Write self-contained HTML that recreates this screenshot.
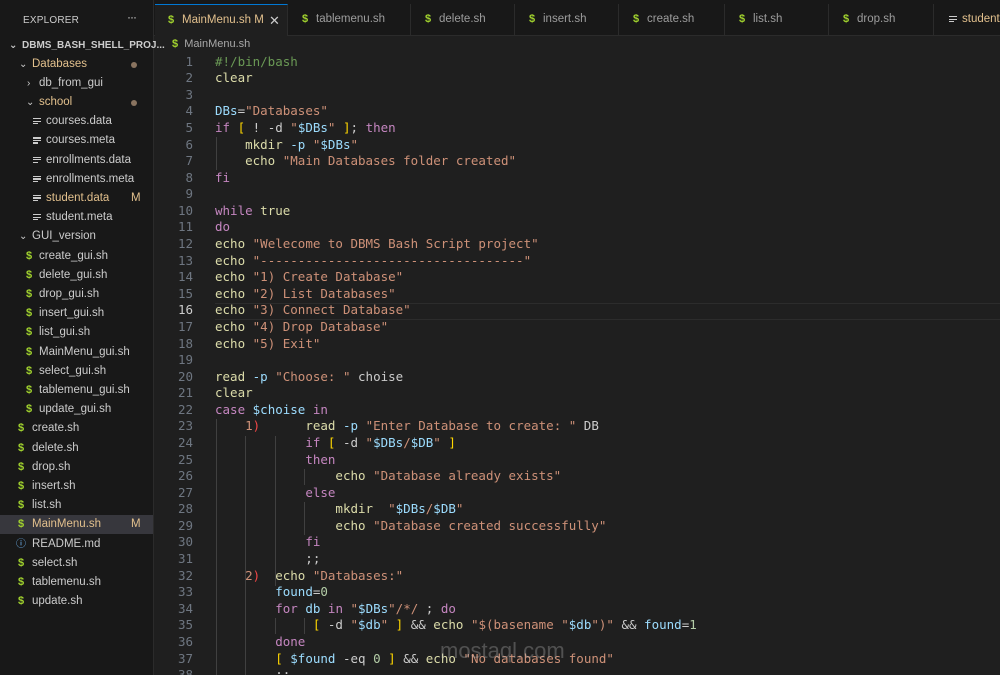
<!DOCTYPE html>
<html><head><meta charset="utf-8"><style>
*{margin:0;padding:0;box-sizing:border-box}
html,body{width:1000px;height:675px;overflow:hidden}
body{background:#1f1f1f;font-family:"Liberation Sans","DejaVu Sans",sans-serif;position:relative}
#side{position:absolute;left:0;top:0;width:154px;height:675px;background:#181818;border-right:1px solid #2b2b2b}
.hdr{position:absolute;left:23px;top:15px;font-size:10px;color:#cccccc;letter-spacing:.2px}
.dots{position:absolute;left:127px;top:10px;font-size:12px;color:#ccc;letter-spacing:-1px}
.row{position:absolute;left:0;width:153px;height:19px;font-size:11.5px;color:#cccccc;line-height:19px;white-space:nowrap}
.row .t{position:absolute}
.sel{background:#37373d}
.y{color:#e2c08d}
.dol{color:#a1d22e;font-weight:bold;font-size:11px;position:absolute}
.fi{position:absolute;width:8px;height:8px;top:6px}
.fi i{display:block;height:1.3px;background:#ccc;margin-bottom:1.3px}
.dot{position:absolute;left:131px;top:7px;width:6px;height:6px;border-radius:50%;background:#8a7460}
.M{position:absolute;left:131px;color:#e2c08d}
.chev{position:absolute;color:#ccc;font-size:10px}
#tabs{position:absolute;left:154px;top:0;right:0;height:36px;background:#181818;border-bottom:1px solid #2b2b2b}
.tab{position:absolute;top:4px;height:31px;border-right:1px solid #2b2b2b;font-size:11.5px;color:#9d9d9d;line-height:31px;white-space:nowrap;overflow:hidden}
.tab.act{background:#1f1f1f;border-top:1px solid #0078d4;height:32px;color:#e2c08d}
#crumb{position:absolute;left:172px;top:38px;font-size:11px;color:#a9a9a9}
#code{position:absolute;left:154px;top:53.7px;right:0;height:640px;font-family:"DejaVu Sans Mono","Liberation Mono",monospace;font-size:12.5px;line-height:16.58px;color:#cccccc}
.ln{position:absolute;top:0;left:0;width:39px;text-align:right;color:#6e7681;white-space:pre}
.cl{position:absolute;top:0;left:61px;white-space:pre}
.k{color:#c586c0}.s{color:#ce9178}.v{color:#9cdcfe}.f{color:#dcdcaa}.c{color:#6a9955}.b{color:#ffd700}.r{color:#f44747}.n{color:#b5cea8}
.g{position:absolute;width:1px;background:#404040}
</style></head><body>
<div id="side">
<div class="hdr">EXPLORER</div><div class="dots">···</div>
<div class="row" style="top:36px;font-weight:bold;font-size:10px"><span class="chev" style="left:9px">⌄</span><span class="t" style="left:22px">DBMS_BASH_SHELL_PROJ...</span></div>
<div class="row y" style="top:54.5px"><span class="chev" style="left:19px">⌄</span><span class="t" style="left:32px">Databases</span><span class="dot"></span></div>
<div class="row" style="top:73.7px"><span class="chev" style="left:27px">›</span><span class="t" style="left:39px">db_from_gui</span></div>
<div class="row y" style="top:92.9px"><span class="chev" style="left:26px">⌄</span><span class="t" style="left:39px">school</span><span class="dot"></span></div>
<div class="row" style="top:112px"><span class="fi" style="left:33px"><i></i><i></i><i style="width:5px"></i></span><span class="t" style="left:46px">courses.data</span></div>
<div class="row" style="top:131.3px"><span class="fi" style="left:33px"><i></i><i></i><i style="width:5px"></i></span><span class="t" style="left:46px">courses.meta</span></div>
<div class="row" style="top:150.5px"><span class="fi" style="left:33px"><i></i><i></i><i style="width:5px"></i></span><span class="t" style="left:46px">enrollments.data</span></div>
<div class="row" style="top:169.7px"><span class="fi" style="left:33px"><i></i><i></i><i style="width:5px"></i></span><span class="t" style="left:46px">enrollments.meta</span></div>
<div class="row y" style="top:188.9px"><span class="fi" style="left:33px"><i></i><i></i><i style="width:5px"></i></span><span class="t" style="left:46px">student.data</span><span class="M">M</span></div>
<div class="row" style="top:208px"><span class="fi" style="left:33px"><i></i><i></i><i style="width:5px"></i></span><span class="t" style="left:46px">student.meta</span></div>
<div class="row" style="top:227.3px"><span class="chev" style="left:19px">⌄</span><span class="t" style="left:32px">GUI_version</span></div>
<div class="row" style="top:246.5px"><span class="dol" style="left:26px">$</span><span class="t" style="left:39px">create_gui.sh</span></div>
<div class="row" style="top:265.7px"><span class="dol" style="left:26px">$</span><span class="t" style="left:39px">delete_gui.sh</span></div>
<div class="row" style="top:284.9px"><span class="dol" style="left:26px">$</span><span class="t" style="left:39px">drop_gui.sh</span></div>
<div class="row" style="top:304px"><span class="dol" style="left:26px">$</span><span class="t" style="left:39px">insert_gui.sh</span></div>
<div class="row" style="top:323.3px"><span class="dol" style="left:26px">$</span><span class="t" style="left:39px">list_gui.sh</span></div>
<div class="row" style="top:342.5px"><span class="dol" style="left:26px">$</span><span class="t" style="left:39px">MainMenu_gui.sh</span></div>
<div class="row" style="top:361.7px"><span class="dol" style="left:26px">$</span><span class="t" style="left:39px">select_gui.sh</span></div>
<div class="row" style="top:380.9px"><span class="dol" style="left:26px">$</span><span class="t" style="left:39px">tablemenu_gui.sh</span></div>
<div class="row" style="top:400px"><span class="dol" style="left:26px">$</span><span class="t" style="left:39px">update_gui.sh</span></div>
<div class="row" style="top:419.3px"><span class="dol" style="left:18px">$</span><span class="t" style="left:32px">create.sh</span></div>
<div class="row" style="top:438.5px"><span class="dol" style="left:18px">$</span><span class="t" style="left:32px">delete.sh</span></div>
<div class="row" style="top:457.7px"><span class="dol" style="left:18px">$</span><span class="t" style="left:32px">drop.sh</span></div>
<div class="row" style="top:476.9px"><span class="dol" style="left:18px">$</span><span class="t" style="left:32px">insert.sh</span></div>
<div class="row" style="top:496px"><span class="dol" style="left:18px">$</span><span class="t" style="left:32px">list.sh</span></div>
<div class="row sel y" style="top:515.3px"><span class="dol" style="left:18px">$</span><span class="t" style="left:32px">MainMenu.sh</span><span class="M">M</span></div>
<div class="row" style="top:534.5px"><span class="t" style="left:16px;color:#75beff;font-size:10px">ⓘ</span><span class="t" style="left:32px">README.md</span></div>
<div class="row" style="top:553.7px"><span class="dol" style="left:18px">$</span><span class="t" style="left:32px">select.sh</span></div>
<div class="row" style="top:572.9px"><span class="dol" style="left:18px">$</span><span class="t" style="left:32px">tablemenu.sh</span></div>
<div class="row" style="top:592px"><span class="dol" style="left:18px">$</span><span class="t" style="left:32px">update.sh</span></div>
</div>
<div id="tabs">
<div class="tab act" style="left:1px;width:133px"><span class="dol" style="left:13px">$</span><span style="position:absolute;left:27px">MainMenu.sh M</span><span style="position:absolute;left:114px;color:#ccc;font-size:13px">✕</span></div>
<div class="tab" style="left:134px;width:123px"><span class="dol" style="left:14px">$</span><span style="position:absolute;left:28px">tablemenu.sh</span></div>
<div class="tab" style="left:257px;width:104px"><span class="dol" style="left:14px">$</span><span style="position:absolute;left:28px">delete.sh</span></div>
<div class="tab" style="left:361px;width:104px"><span class="dol" style="left:14px">$</span><span style="position:absolute;left:28px">insert.sh</span></div>
<div class="tab" style="left:465px;width:106px"><span class="dol" style="left:14px">$</span><span style="position:absolute;left:28px">create.sh</span></div>
<div class="tab" style="left:571px;width:104px"><span class="dol" style="left:14px">$</span><span style="position:absolute;left:28px">list.sh</span></div>
<div class="tab" style="left:675px;width:105px"><span class="dol" style="left:14px">$</span><span style="position:absolute;left:28px">drop.sh</span></div>
<div class="tab" style="left:780px;width:80px;border-right:0"><span class="fi" style="left:15px;top:12px"><i></i><i></i><i style="width:5px"></i></span><span style="position:absolute;left:28px;color:#e2c08d">student.data</span></div>
</div>
<div id="crumb"><span class="dol" style="position:static">$</span>&nbsp; MainMenu.sh</div>
<div style="position:absolute;left:215px;top:302.5px;right:0;height:17px;border-top:1px solid #2c2c2c;border-bottom:1px solid #2c2c2c"></div>
<div class="g" style="left:216px;top:137px;height:33px"></div>
<div class="g" style="left:216px;top:419px;height:256px"></div>
<div class="g" style="left:245px;top:436px;height:150px"></div>
<div class="g" style="left:275px;top:436px;height:150px"></div>
<div class="g" style="left:304px;top:469px;height:16px"></div>
<div class="g" style="left:304px;top:502px;height:33px"></div>
<div class="g" style="left:245px;top:585px;height:90px"></div>
<div class="g" style="left:275px;top:618px;height:16px"></div>
<div class="g" style="left:304px;top:618px;height:16px"></div>
<div id="code"><div class="ln">1
2
3
4
5
6
7
8
9
10
11
12
13
14
15
<span style="color:#ccc">16</span>
17
18
19
20
21
22
23
24
25
26
27
28
29
30
31
32
33
34
35
36
37
38</div><div class="cl"><span class="c">#!/bin/bash</span>
<span class="f">clear</span>

<span class="v">DBs</span>=<span class="s">"Databases"</span>
<span class="k">if</span> <span class="b">[</span> ! -d <span class="s">"</span><span class="v">$DBs</span><span class="s">"</span> <span class="b">]</span>; <span class="k">then</span>
    <span class="f">mkdir</span> <span class="v">-p</span> <span class="s">"</span><span class="v">$DBs</span><span class="s">"</span>
    <span class="f">echo</span> <span class="s">"Main Databases folder created"</span>
<span class="k">fi</span>

<span class="k">while</span> <span class="f">true</span>
<span class="k">do</span>
<span class="f">echo</span> <span class="s">"Welecome to DBMS Bash Script project"</span>
<span class="f">echo</span> <span class="s">"-----------------------------------"</span>
<span class="f">echo</span> <span class="s">"1) Create Database"</span>
<span class="f">echo</span> <span class="s">"2) List Databases"</span>
<span class="f">echo</span> <span class="s">"3) Connect Database"</span>
<span class="f">echo</span> <span class="s">"4) Drop Database"</span>
<span class="f">echo</span> <span class="s">"5) Exit"</span>

<span class="f">read</span> <span class="v">-p</span> <span class="s">"Choose: "</span> choise
<span class="f">clear</span>
<span class="k">case</span> <span class="v">$choise</span> <span class="k">in</span>
    <span class="s">1</span><span class="r">)</span>      <span class="f">read</span> <span class="v">-p</span> <span class="s">"Enter Database to create: "</span> DB
            <span class="k">if</span> <span class="b">[</span> -d <span class="s">"</span><span class="v">$DBs</span><span class="s">/</span><span class="v">$DB</span><span class="s">"</span> <span class="b">]</span>
            <span class="k">then</span>
                <span class="f">echo</span> <span class="s">"Database already exists"</span>
            <span class="k">else</span>
                <span class="f">mkdir</span>  <span class="s">"</span><span class="v">$DBs</span><span class="s">/</span><span class="v">$DB</span><span class="s">"</span>
                <span class="f">echo</span> <span class="s">"Database created successfully"</span>
            <span class="k">fi</span>
            ;;
    <span class="s">2</span><span class="r">)</span>  <span class="f">echo</span> <span class="s">"Databases:"</span>
        <span class="v">found</span>=<span class="n">0</span>
        <span class="k">for</span> <span class="v">db</span> <span class="k">in</span> <span class="s">"</span><span class="v">$DBs</span><span class="s">"/*/</span> ; <span class="k">do</span>
             <span class="b">[</span> -d <span class="s">"</span><span class="v">$db</span><span class="s">"</span> <span class="b">]</span> &amp;&amp; <span class="f">echo</span> <span class="s">"$(basename "</span><span class="v">$db</span><span class="s">")"</span> &amp;&amp; <span class="v">found</span>=<span class="n">1</span>
        <span class="k">done</span>
        <span class="b">[</span> <span class="v">$found</span> -eq <span class="n">0</span> <span class="b">]</span> &amp;&amp; <span class="f">echo</span> <span class="s">"No databases found"</span>
        ;;</div></div>
<div style="position:absolute;left:440px;top:638px;font-size:22px;color:rgba(200,200,200,.3);font-family:'Liberation Sans',sans-serif">mostaql.com</div>
</body></html>
